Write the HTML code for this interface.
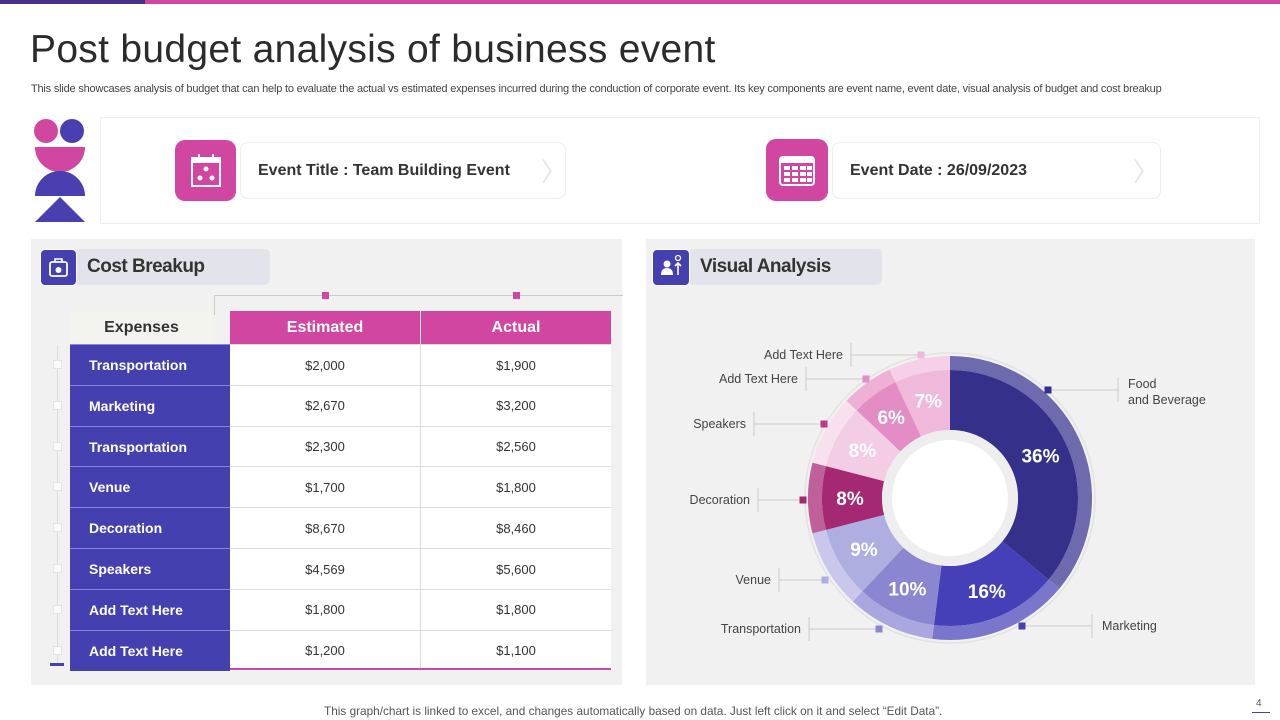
<!DOCTYPE html>
<html><head><meta charset="utf-8"><style>
*{margin:0;padding:0;box-sizing:border-box}
body{width:1280px;height:720px;background:#fff;font-family:"Liberation Sans",sans-serif;position:relative;overflow:hidden;color:#333}
.abs{position:absolute}
.cell{position:absolute;display:flex;align-items:center;justify-content:center;font-size:13px;color:#333}
</style></head><body>
<div class="abs" style="left:0;top:0;width:145px;height:4px;background:#45308a"></div>
<div class="abs" style="left:145px;top:0;width:1135px;height:4px;background:#d046a0"></div>
<div class="abs" style="left:30px;top:28px;font-size:39px;color:#2b2b2b;font-weight:300;letter-spacing:0.3px">Post budget analysis of business event</div>
<div class="abs" style="left:31px;top:83px;font-size:11px;color:#444;letter-spacing:-0.2px;white-space:nowrap">This slide showcases analysis of budget that can help to evaluate the actual vs estimated expenses incurred during the conduction of corporate event. Its key components are event name, event date, visual analysis of budget and cost breakup</div>

<!-- logo -->
<svg class="abs" style="left:33px;top:118px" width="54" height="106">
<circle cx="13" cy="13" r="12" fill="#d046a0"/><circle cx="39" cy="13" r="12" fill="#4a3fb0"/>
<path d="M2 29 H52 A25 25 0 0 1 2 29Z" fill="#d046a0"/>
<path d="M2 78 A25 25 0 0 1 52 78Z" fill="#4a3fb0"/>
<path d="M27 79 L52 104 H2Z" fill="#4a3fb0"/>
</svg>
<div class="abs" style="left:100px;top:117px;width:1160px;height:107px;border:1px solid #eee;background:#fff"></div>
<!-- event title -->
<div class="abs" style="left:240px;top:142px;width:326px;height:57px;border:1px solid #eee;border-radius:8px;background:#fff"></div>
<div class="abs" style="left:172px;top:137px;width:67px;height:67px;background:#fff;border-radius:10px"></div>
<div class="abs" style="left:175px;top:140px;width:61px;height:61px;background:#d046a0;border-radius:10px"></div>
<svg class="abs" style="left:188px;top:152px" width="36" height="38"><rect x="4" y="6" width="28" height="28" fill="none" stroke="#fff" stroke-width="2"/><rect x="4" y="6" width="28" height="5" fill="#fff"/><line x1="11" y1="2" x2="11" y2="8" stroke="#fff" stroke-width="2"/><line x1="25" y1="2" x2="25" y2="8" stroke="#fff" stroke-width="2"/><circle cx="18" cy="17" r="2.5" fill="#fff"/><circle cx="12" cy="26" r="2.5" fill="#fff"/><circle cx="24" cy="26" r="2.5" fill="#fff"/></svg>
<div class="abs" style="left:258px;top:162px;font-size:16px;font-weight:bold;color:#333">Event Title : Team Building Event</div>
<div class="abs" style="left:541px;top:152px;font-size:26px;color:#e6e6e6">〉</div>
<!-- event date -->
<div class="abs" style="left:832px;top:142px;width:329px;height:57px;border:1px solid #eee;border-radius:8px;background:#fff"></div>
<div class="abs" style="left:763px;top:137px;width:67px;height:67px;background:#fff;border-radius:10px"></div>
<div class="abs" style="left:766px;top:139px;width:62px;height:62px;background:#d046a0;border-radius:10px"></div>
<svg class="abs" style="left:778px;top:153px" width="38" height="34"><rect x="2" y="4" width="34" height="28" rx="3" fill="none" stroke="#fff" stroke-width="2"/><rect x="2" y="4" width="34" height="6" fill="#fff"/><g fill="#fff"><rect x="6" y="13" width="6" height="4"/><rect x="14" y="13" width="6" height="4"/><rect x="22" y="13" width="6" height="4"/><rect x="29" y="13" width="5" height="4"/><rect x="6" y="19" width="6" height="4"/><rect x="14" y="19" width="6" height="4"/><rect x="22" y="19" width="6" height="4"/><rect x="29" y="19" width="5" height="4"/><rect x="6" y="25" width="6" height="4"/><rect x="14" y="25" width="6" height="4"/><rect x="22" y="25" width="6" height="4"/><rect x="29" y="25" width="5" height="4"/></g></svg>
<div class="abs" style="left:850px;top:162px;font-size:16px;font-weight:bold;color:#333">Event Date : 26/09/2023</div>
<div class="abs" style="left:1133px;top:152px;font-size:26px;color:#e6e6e6">〉</div>

<!-- cost breakup panel -->
<div class="abs" style="left:31px;top:239px;width:591px;height:446px;background:#f1f1f1"></div>
<div class="abs" style="left:75px;top:249px;width:195px;height:36px;background:#e3e3ec;border-radius:5px"></div>
<div class="abs" style="left:40px;top:249px;width:37px;height:37px;background:#4540b0;border-radius:5px;border:1px solid #fff"></div>
<svg class="abs" style="left:46px;top:255px" width="25" height="25"><rect x="4" y="7" width="17" height="14" rx="2" fill="none" stroke="#fff" stroke-width="1.8"/><path d="M9 7 V4 H16 V7" fill="none" stroke="#fff" stroke-width="1.6"/><circle cx="12.5" cy="15" r="3" fill="#fff"/></svg>
<div class="abs" style="left:87px;top:256px;font-size:19px;font-weight:bold;color:#333;letter-spacing:-0.5px">Cost Breakup</div>
<div class="abs" style="left:214px;top:295px;width:409px;height:1px;background:#ccc"></div>
<div class="abs" style="left:214px;top:295px;width:1px;height:20px;background:#ccc"></div>
<div class="abs" style="left:322px;top:292px;width:7px;height:7px;background:#d046a0"></div>
<div class="abs" style="left:513px;top:292px;width:7px;height:7px;background:#d046a0"></div>
<div class="abs" style="left:57px;top:345px;width:1px;height:320px;background:#ddd"></div>
<div class="abs" style="left:50px;top:663px;width:14px;height:3px;background:#4540b0"></div>
<div class="cell" style="left:70px;top:311px;width:143px;height:33px;background:#f4f4ee;font-size:16px;font-weight:bold;color:#333">Expenses</div>
<div class="cell" style="left:230px;top:311px;width:190px;height:33px;background:#d046a0;color:#fff;font-size:16px;font-weight:bold">Estimated</div>
<div class="cell" style="left:421px;top:311px;width:190px;height:33px;background:#d046a0;color:#fff;font-size:16px;font-weight:bold">Actual</div>
<div id="rows"></div>
<div class="abs" style="left:230px;top:668px;width:381px;height:2px;background:#d046a0"></div>

<!-- visual analysis panel -->
<div class="abs" style="left:646px;top:239px;width:609px;height:446px;background:#f1f1f1"></div>
<div class="abs" style="left:688px;top:249px;width:194px;height:36px;background:#e3e3ec;border-radius:5px"></div>
<div class="abs" style="left:652px;top:249px;width:38px;height:37px;background:#4540b0;border-radius:5px;border:1px solid #fff"></div>
<svg class="abs" style="left:658px;top:253px" width="26" height="28"><circle cx="9" cy="11" r="3.5" fill="#fff"/><path d="M3 22 Q3 15 9 15 Q15 15 15 22Z" fill="#fff"/><path d="M20 22 V10 M17 13 L20 10 L23 13" stroke="#fff" stroke-width="1.6" fill="none"/><circle cx="20" cy="5" r="2.5" fill="none" stroke="#fff" stroke-width="1.3"/></svg>
<div class="abs" style="left:700px;top:256px;font-size:19px;font-weight:bold;color:#333;letter-spacing:-0.5px">Visual Analysis</div>
<svg id="chart" class="abs" style="left:646px;top:239px" width="609" height="446"></svg>

<div class="abs" style="left:324px;top:704px;font-size:11.8px;color:#555;white-space:nowrap">This graph/chart is linked to excel,  and changes automatically based on data. Just left click on it and select “Edit Data”.</div>
<div class="abs" style="left:1256px;top:698px;font-size:10px;color:#555">4</div>
<div class="abs" style="left:1252px;top:712px;width:18px;height:1px;background:#4540b0"></div>
<script>
var d=[["Transportation","$2,000","$1,900"],["Marketing","$2,670","$3,200"],["Transportation","$2,300","$2,560"],["Venue","$1,700","$1,800"],["Decoration","$8,670","$8,460"],["Speakers","$4,569","$5,600"],["Add Text Here","$1,800","$1,800"],["Add Text Here","$1,200","$1,100"]];
var h="";for(var i=0;i<8;i++){var t=344+i*40.8;
h+='<div class="abs" style="left:53px;top:'+(t+16)+'px;width:9px;height:9px;background:#fafafa;border:1px solid #e4e4e4"></div>';
h+='<div class="cell" style="justify-content:flex-start;padding-left:19px;left:70px;top:'+t+'px;width:160px;height:41px;background:#4540b0;color:#fff;font-weight:bold;font-size:14px;border-top:1px solid #8a86dc">'+d[i][0]+'</div>';
h+='<div class="cell" style="left:230px;top:'+t+'px;width:191px;height:41px;background:#fff;border-top:1px solid #ddd;border-right:1px solid #ddd">'+d[i][1]+'</div>';
h+='<div class="cell" style="left:421px;top:'+t+'px;width:190px;height:41px;background:#fff;border-top:1px solid #ddd">'+d[i][2]+'</div>';}
document.getElementById('rows').innerHTML=h;
var cx=304,cy=259,S="";
function P(a,r){var t=(a-90)*Math.PI/180;return [cx+r*Math.cos(t),cy+r*Math.sin(t)];}
function arc(a0,a1,r0,r1,c){var p=P(a0,r1),q=P(a1,r1),s=P(a1,r0),u=P(a0,r0),l=a1-a0>180?1:0;
return '<path d="M'+p+' A'+r1+' '+r1+' 0 '+l+' 1 '+q+' L'+s+' A'+r0+' '+r0+' 0 '+l+' 0 '+u+'Z" fill="'+c+'"/>';}
S+='<circle cx="'+cx+'" cy="'+cy+'" r="145" fill="none" stroke="#e2e2e2" stroke-width="1.5"/>';
var seg=[[36,"#35308a","#6e6aae","36%"],[16,"#4540b8","#7a76cc","16%"],[10,"#8a86d0","#aaa7e0","10%"],[9,"#aeaee0","#c9c8ec","9%"],[8,"#a52872","#c0609a","8%"],[8,"#f3cde3","#f8e0ee","8%"],[6,"#e48cc4","#efb0d6","6%"],[7,"#f0b8da","#f6d0e6","7%"]];
var a=0;for(var k=0;k<seg.length;k++){var b=a+seg[k][0]*3.6;S+=arc(a,b,128,142,seg[k][2]);S+=arc(a,b,68,128,seg[k][1]);
var m=P((a+b)/2,100);S+='<text x="'+m[0]+'" y="'+(m[1]+7)+'" text-anchor="middle" font-family="Liberation Sans" font-weight="bold" font-size="19" fill="#fff">'+seg[k][3]+'</text>';a=b;}
S+='<circle cx="'+cx+'" cy="'+cy+'" r="68" fill="#eee"/><circle cx="'+cx+'" cy="'+cy+'" r="58" fill="#fff"/>';
var L=[[275,116,"Add Text Here",[205,116],110,"end"],[220,140,"Add Text Here",[160,140],54,"end"],[178,185,"Speakers",[108,185],97,"end"],[157,261,"Decoration",[112,261],99,"end"],[179,341,"Venue",[133,341],120,"end"],[233,390,"Transportation",[163,390],151,"end"],[402,151,"Food",[472,151],0,"start"],[376,387,"Marketing",[446,387],0,"start"]];
var col=["#f0b8da","#e48cc4","#c0387e","#a52872","#aeaee0","#8a86d0","#35308a","#4540b8"];
for(var k=0;k<L.length;k++){var x=L[k][0],y=L[k][1],e=L[k][3][0];
S+='<line x1="'+x+'" y1="'+y+'" x2="'+e+'" y2="'+y+'" stroke="#ccc"/><line x1="'+e+'" y1="'+(y-12)+'" x2="'+e+'" y2="'+(y+12)+'" stroke="#ccc"/>';
S+='<rect x="'+(x-3.5)+'" y="'+(y-3.5)+'" width="7" height="7" fill="'+col[k]+'"/>';
var tx=L[k][5]=="end"?e-8:e+10;
if(k==6){S+='<text x="'+tx+'" y="'+(y-2)+'" font-family="Liberation Sans" font-size="12.5" fill="#444">Food</text><text x="'+tx+'" y="'+(y+14)+'" font-family="Liberation Sans" font-size="12.5" fill="#444">and Beverage</text>';}
else S+='<text x="'+tx+'" y="'+(y+4)+'" text-anchor="'+L[k][5]+'" font-family="Liberation Sans" font-size="12.5" fill="#444">'+L[k][2]+'</text>';}
document.getElementById('chart').innerHTML=S;
</script>
</body></html>
